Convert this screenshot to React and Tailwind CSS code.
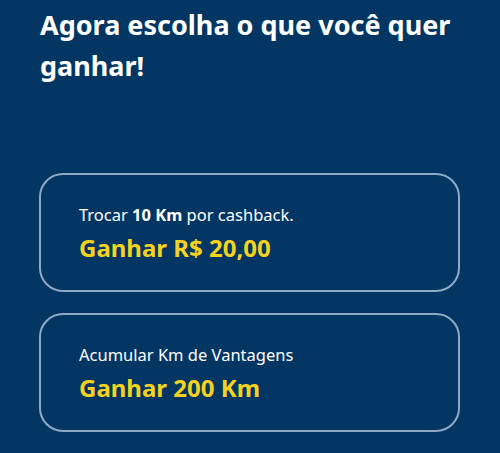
export default function App() {
  return (
    <div
      className="w-[500px] h-[453px] bg-[#033663] overflow-hidden"
      style={{ fontFamily: '"Noto Sans", "Open Sans", sans-serif' }}
    >
      <div className="pl-[40px] pr-[30px] pt-[4px]">
        <h1 className="text-white font-bold text-[27px] leading-[41px]">
          Agora escolha o que você quer ganhar!
        </h1>
      </div>
      <div className="flex flex-col gap-[21px] mt-[87px] pl-[39px] pr-[40px]">
        <div className="h-[119px] rounded-[24px] border-2 border-[#8fa9c6] pl-[38px] pt-[2px] flex flex-col justify-center">
          <p className="text-white text-[16.5px] leading-[20px]">
            Trocar <span className="font-bold">10 Km</span> por cashback.
          </p>
          <p className="text-[#f5d21f] font-bold text-[24px] leading-[30px] mt-[8px]">
            Ganhar R$ 20,00
          </p>
        </div>
        <div className="h-[119px] rounded-[24px] border-2 border-[#8fa9c6] pl-[38px] pt-[2px] flex flex-col justify-center">
          <p className="text-white text-[16.5px] leading-[20px]">
            Acumular Km de Vantagens
          </p>
          <p className="text-[#f5d21f] font-bold text-[24px] leading-[30px] mt-[8px]">
            Ganhar 200 Km
          </p>
        </div>
      </div>
    </div>
  );
}
